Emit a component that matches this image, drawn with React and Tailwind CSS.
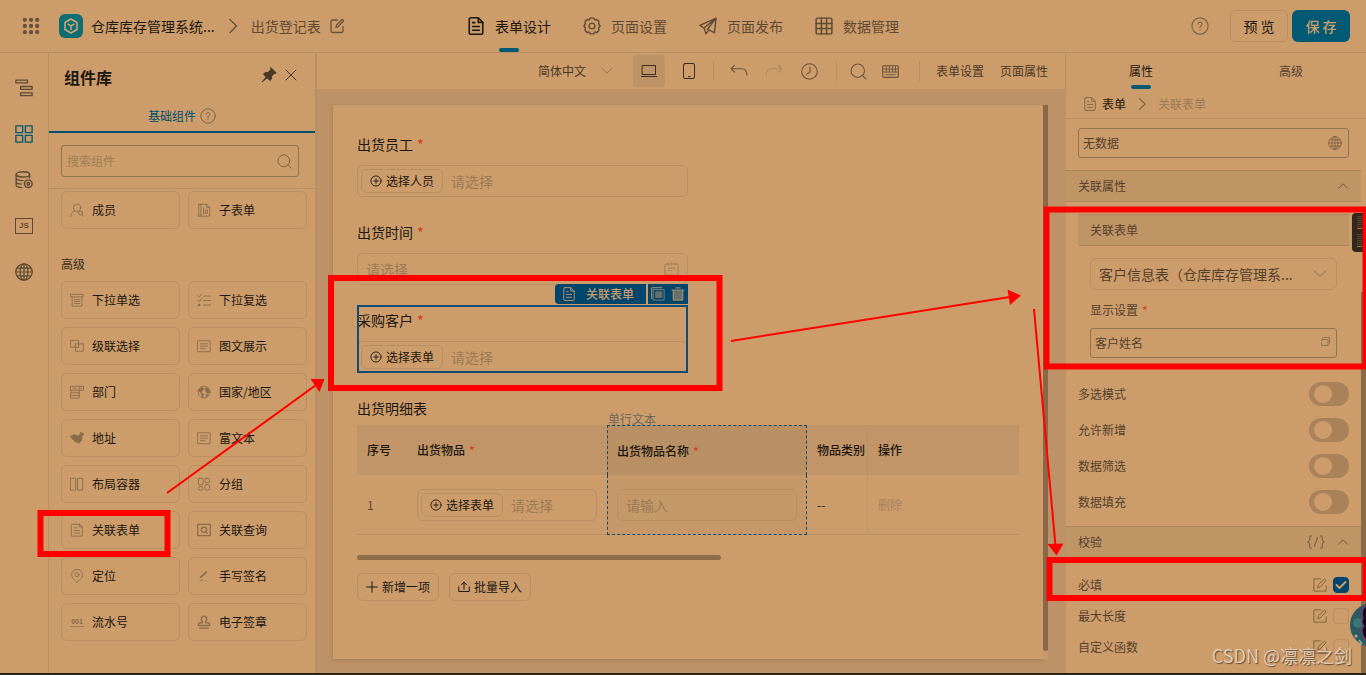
import React from "react";

function Icon({ size = 16, box = 16, sw = 1, className = "", children }) {
  return (
    <svg
      width={size}
      height={size}
      viewBox={`0 0 ${box} ${box}`}
      fill="none"
      stroke="currentColor"
      strokeWidth={sw}
      strokeLinecap="round"
      strokeLinejoin="round"
      className={`shrink-0 ${className}`}
      aria-hidden="true"
    >
      {children}
    </svg>
  );
}

const Doc = (p) => (
  <Icon {...p}>
    <path d="M3.500 .7h6.500l4 4v9.300a1.400 1.400 0 0 1-1.400 1.400h-9.200A1.400 1.400 0 0 1 2 14v-11.900A1.400 1.400 0 0 1 3.500 .7z" />
    <path d="M10 .8v4h4M5 5h2M5 8.500h6M5 11.800h6" />
  </Icon>
);
const Help = (p) => (
  <Icon {...p}>
    <circle cx="8" cy="8" r="7.200" />
    <path d="M6.200 6.300c0-2.400 3.700-2.300 3.700 0 0 1.400-1.900 1.500-1.900 3.100M8 11.300v.3" />
  </Icon>
);
const Search = (p) => (
  <Icon {...p}>
    <circle cx="7.300" cy="7.300" r="6.300" />
    <path d="M12 12l3 3" />
  </Icon>
);
const Globe = (p) => (
  <Icon {...p}>
    <circle cx="8" cy="8" r="7.300" />
    <ellipse cx="8" cy="8" rx="3.500" ry="7.300" />
    <path d="M.7 8h14.600M8 .7v14.600M1.800 4.500h12.400M1.800 11.500h12.400" />
  </Icon>
);
const Chevron = ({ dir, ...p }) => (
  <Icon {...p}>
    <path d={dir === "right" ? "M5 1.500l6.500 6.500-6.500 6.500" : dir === "up" ? "M2 11l6-6 6 6" : "M1.500 4.500L8 11l6.500-6.500"} />
  </Icon>
);
const PlusCircle = (p) => (
  <Icon {...p}>
    <circle cx="8" cy="8" r="6.800" />
    <path d="M8 5v6M5 8h6" />
  </Icon>
);
const EditSquare = (p) => (
  <Icon {...p}>
    <path d="M9 1H1v14h14V9" />
    <path d="M5.500 10.800l.7-3.300L12.700 1.700c1-.8 2.600.8 1.700 1.800L8.500 10z" />
  </Icon>
);

const glyphs = {
  member: (
    <>
      <circle cx="8" cy="5.500" r="4.200" />
      <path d="M1 15.300c0-3 1.500-5.300 4-6M15 15.300l-1.200-2" />
      <circle cx="12" cy="11.500" r="2.200" />
    </>
  ),
  subform: (
    <>
      <path d="M5 1.500h6l3.500 3.500v10H5zM2 1.500v13.500M2 1.500h3M2 15h3M11 1.500V5h3.500" />
      <path d="M7.500 5.500v7M10 8h2v4h-2z" />
    </>
  ),
  select: (
    <>
      <path d="M1 1.500h14v3H1zM2.500 4.500V15h11V4.500" />
      <path d="M5 7.500h6M5 9.700h6M5 12h6" />
    </>
  ),
  multi: (
    <>
      <path d="M.8 3l1.800 1.800L5.300 1.500M.8 8l1.800 1.800L5.300 6.500M7.500 3.500H16M7.500 8.500H16M7.500 13.700H16" />
      <rect x="1.800" y="13" width="1.500" height="1.500" fill="currentColor" />
    </>
  ),
  cascade: <path d="M6 9.500H.8v-8h9v4M6.500 5.500h3.300v4H6.500zM9.800 5.500h5.500v8.500h-9V9.500" />,
  text: (
    <>
      <rect x="1" y="2" width="14" height="12.500" />
      <path d="M4 5.500h8M4 8.200h8M4 11h5" />
    </>
  ),
  dept: (
    <>
      <path d="M1 1.500h14.500v4.500H1zM10.500 1.500V6M1 9h9.500v6H1zM10.500 6v3M1 6v3M1 12h9.500" />
      <path d="M3.500 3.800h4M12.500 3.800h1" />
    </>
  ),
  world: (
    <>
      <circle cx="8" cy="8" r="6.800" />
      <path d="M2 5l3.500-2.500L7.500 4 6 6.500l-1 2L2.500 7zM10 3l3 1.500 1.500 4-2.500 1-2.500-3zM5 9.500l2.500 1-1 3.500zM10.500 11l2 .5-1.500 1.500z" fill="currentColor" />
    </>
  ),
  china: (
    <path
      d="M.8 6l2.700-.8L4.700 3.500l1.800 1.500 3 .7 1.800-1.500.5-2.700 2.200 1.200 1.600-.2-.6 2.300-2 1.500.7 2-.6 2.800-2 1.500-1 1.600-1.600-1.700-2 .4-1.200-1.900L2.500 9z"
      fill="currentColor"
    />
  ),
  columns: <path d="M1 1.500h5.500v13.500H1zM9 1.500h5.500v13.500H9z" />,
  group: (
    <>
      <rect x="1.500" y="1.500" width="5.500" height="7.500" rx="1" />
      <rect x="9" y="1.500" width="5.500" height="5" rx="2" />
      <rect x="1.500" y="11" width="5.500" height="4" rx="2" />
      <rect x="9" y="8.500" width="5.500" height="6.500" rx="2" />
    </>
  ),
  form: (
    <>
      <path d="M2 1.500h9l3 3v10.500H2zM11 1.500v3h3" />
      <path d="M5 5.500h3M5 8.500h6M5 11.500h6" />
    </>
  ),
  query: (
    <>
      <rect x=".8" y="1.500" width="14.400" height="13" strokeWidth="1.400" />
      <circle cx="8" cy="7.600" r="3" strokeWidth="1.400" />
      <path d="M10 10l1.800 1.800" strokeWidth="1.400" />
    </>
  ),
  pin: (
    <>
      <path d="M8 15.500C4 11.700 1.800 9.400 1.800 6.600a6.200 6.200 0 0 1 12.400 0c0 2.800-2.200 5.100-6.200 8.900z" />
      <circle cx="8" cy="6.600" r="2.200" />
    </>
  ),
  sign: (
    <>
      <path d="M4 9.500L10.500 3.500" strokeWidth="1.800" />
      <path d="M3.500 13.500l1.500-1.300 1.500 1.300M10 13.500h.5" />
    </>
  ),
  stamp: (
    <path
      d="M6.300 9c0-2-1.500-2.500-1.500-4.500a3.200 3.200 0 0 1 6.400 0c0 2-1.500 2.500-1.500 4.500h3.500c1 0 1.300.6 1.300 3h-13c0-2.400.3-3 1.300-3zM3 15h10"
      strokeWidth="1.500"
    />
  ),
};

const tools = [
  ["select", "下拉单选"],
  ["multi", "下拉复选"],
  ["cascade", "级联选择"],
  ["text", "图文展示"],
  ["dept", "部门"],
  ["world", "国家/地区"],
  ["china", "地址"],
  ["text", "富文本"],
  ["columns", "布局容器"],
  ["group", "分组"],
  ["form", "关联表单"],
  ["query", "关联查询"],
  ["pin", "定位"],
  ["sign", "手写签名"],
  ["serial", "流水号"],
  ["stamp", "电子签章"],
];

function Tool({ icon, label }) {
  return (
    <button type="button" className="flex h-[38px] items-center gap-2 rounded-md border border-[#ba8f61] px-2 text-xs text-[#1d1711]">
      {icon === "serial" ? (
        <span className="w-3.5 border-b border-[#a07d55] text-center font-['Liberation_Sans',sans-serif] text-[7px] leading-[9px] font-bold text-[#8b6b48]">001</span>
      ) : (
        <Icon size={14} className="text-[#8b6b48]">{glyphs[icon]}</Icon>
      )}
      {label}
    </button>
  );
}

function Header() {
  const nav = [
    ["表单设计", <Doc size={18} sw={1.400} />, true],
    [
      "页面设置",
      <Icon size={18} sw={1.200}>
        <path d="M6.400 1h3.200l.9 1.700 1.900-.5 1.900 2-.5 1.900L15.200 8l-1.400 1.900.5 1.900-1.900 2-1.900-.5L9.600 15H6.400l-.9-1.700-1.900.5-1.900-2 .5-1.900L.8 8l1.400-1.900-.5-1.900 1.900-2 1.900.5z" />
        <circle cx="8" cy="8" r="2.600" />
      </Icon>,
    ],
    [
      "页面发布",
      <Icon size={18} sw={1.200}>
        <path d="M15.200 1L.8 7.500l3.700 2.300L15.200 1l-1.500 13-5-2.500-2.500 3.500-1.700-5.200M15.200 1L7.500 11" />
      </Icon>,
    ],
    [
      "数据管理",
      <Icon size={18} sw={1.300}>
        <rect x="1" y="1" width="14" height="14" rx="1" />
        <path d="M5.700 1v14M10.300 1v14M1 5.700h14M1 10.300h14" />
      </Icon>,
    ],
  ];
  return (
    <header className="grid h-[53px] shrink-0 grid-cols-[1fr_auto_1fr] items-center border-b border-[#ba8f61] px-4">
      <div className="flex items-center">
        <button type="button" aria-label="应用" className="mr-[19px] ml-1.5 text-[#6b5238]">
          <Icon size={18}>
            {[2.500, 8, 13.500].map((x) =>
              [2.500, 8, 13.500].map((y) => <circle key={`${x}-${y}`} cx={x} cy={y} r="1.400" fill="currentColor" />)
            )}
          </Icon>
        </button>
        <span className="flex size-6 items-center justify-center rounded-md bg-[#0f6e74] text-[#cfa678]">
          <Icon size={16} sw={1.500}>
            <path d="M8 1l6 3.500v7L8 15l-6-3.500v-7zM5 6.200L8 8l3-1.800M8 8v3.500" />
          </Icon>
        </span>
        <span className="ml-2 text-sm text-[#1d1711]">仓库库存管理系统...</span>
        <Chevron dir="right" size={16} sw={1.400} className="mx-2.5 text-[#6b5238]" />
        <span className="text-sm text-[#5f4932]">出货登记表</span>
        <button type="button" aria-label="编辑" className="ml-2 text-[#6b5238]">
          <Icon size={16} sw={1.300}>
            <path d="M8.500 2H3.500A1.500 1.500 0 0 0 2 3.500v9.500a1.500 1.500 0 0 0 1.500 1.500h9A1.500 1.500 0 0 0 14 13V8.500M7 9.500l.5-2.200 5.300-5.500c.9-.8 2.200.6 1.500 1.500L9 8.900z" />
          </Icon>
        </button>
      </div>
      <nav className="flex h-full gap-8">
        {nav.map(([label, icon, on]) => (
          <a key={label} href="#" className={`relative flex h-full items-center gap-2.5 text-sm ${on ? "text-[#1d1711]" : "text-[#5f4932]"}`}>
            {icon}
            {label}
            {on && <span className="absolute bottom-0 left-1/2 h-1 w-5 -translate-x-1/2 rounded-full bg-[#005a73]" />}
          </a>
        ))}
      </nav>
      <div className="flex items-center justify-end gap-1">
        <button type="button" aria-label="帮助" className="mr-[17px] text-[#80623f]">
          <Help size={18} />
        </button>
        <button type="button" className="h-8 w-[58px] rounded-md border border-[#ba8f61] text-sm text-[#1d1711]">预 览</button>
        <button type="button" className="h-8 w-[58px] rounded-md bg-[#005a73] text-sm font-medium text-[#cc9d6b]">保 存</button>
      </div>
    </header>
  );
}

function Rail() {
  const items = [
    ["大纲", <path d="M.8 1h10.200v2.500H.800zM5 6.700h10.200v2.500H5zM5 12.300h10.200v2.500H5z" />],
    ["组件", <path d="M.8.800h6v6h-6zM9.200.800h6v6h-6zM.8 9.200h6v6h-6zM9.200 9.200h6v6h-6z" />],
    [
      "数据",
      <>
        <ellipse cx="7" cy="3" rx="6" ry="2.300" />
        <path d="M1 3v9.500c0 1.300 2 2.200 5 2.300M13 3v3M1 6.300c0 1.200 2.500 2.200 6 2.200M1 9.500c0 1.200 2 2 4.500 2.100" />
        <circle cx="11.800" cy="11.300" r="3.400" strokeDasharray="2 .7" strokeWidth="1.300" />
        <circle cx="11.800" cy="11.300" r="1.100" />
      </>,
    ],
    ["脚本", null],
    ["语言", null],
  ];
  return (
    <aside className="flex w-[49px] shrink-0 flex-col items-center gap-7 border-r border-[#ba8f61] pt-[26px] text-[#5f4932]">
      {items.map(([label, art], i) => (
        <button key={label} type="button" aria-label={label} className={`flex size-[18px] items-center justify-center ${i === 1 ? "text-[#005a73]" : ""}`}>
          {label === "脚本" ? (
            <span className="flex h-4 w-[18px] shrink-0 items-center justify-center border border-[#5f4932] font-['Liberation_Sans',sans-serif] text-[8px] leading-none font-bold">JS</span>
          ) : label === "语言" ? (
            <Globe size={18} sw={1.100} />
          ) : (
            <Icon size={18} sw={1.200}>{art}</Icon>
          )}
        </button>
      ))}
    </aside>
  );
}

function Library() {
  return (
    <aside className="flex w-[268px] shrink-0 flex-col border-r-2 border-[#ba8f61]">
      <div className="flex h-11 items-center pr-4 pl-[15px]">
        <h2 className="grow pt-1 text-base font-bold text-[#1d1711]">组件库</h2>
        <button type="button" aria-label="固定" className="mr-1.5 text-[#4a3826]">
          <Icon size={16}>
            <path d="M10 .8l5.200 5.200-2 .5-2.700 2.700-.2 3-1.500 1.300-2.700-2.700L1 15l4.200-5L2.500 7.200 4 5.700l3-.2 2.700-2.700z" fill="currentColor" />
          </Icon>
        </button>
        <button type="button" aria-label="关闭" className="text-[#4a3826]">
          <Icon size={16}><path d="M3 3l10 10M13 3L3 13" /></Icon>
        </button>
      </div>
      <div className="flex h-9 items-center justify-center gap-1 border-b-2 border-[#004f6e] pt-1 text-xs text-[#004f6e]">
        基础组件
        <Help size={16} className="text-[#80623f]" />
      </div>
      <div className="border-b border-[#ba8f61] pt-3 pr-4 pb-[11px] pl-3">
        <label className="flex h-8 items-center rounded-[3px] border border-[#94744d] pr-1.5 pl-[5px]">
          <input placeholder="搜索组件" aria-label="搜索组件" className="min-w-0 grow bg-transparent text-xs outline-none placeholder:text-[#a07d55]" />
          <Search size={15} className="text-[#80623f]" />
        </label>
      </div>
      <div className="grow overflow-hidden pt-0.5 pr-2 pl-3">
        <div className="grid grid-cols-2 gap-2">
          <Tool icon="member" label="成员" />
          <Tool icon="subform" label="子表单" />
        </div>
        <h3 className="mt-[26px] mb-2 text-xs leading-[18px] text-[#3a2c1e]">高级</h3>
        <div className="grid grid-cols-2 gap-2">
          {tools.map(([icon, label]) => (
            <Tool key={label} icon={icon} label={label} />
          ))}
        </div>
      </div>
    </aside>
  );
}

function Toolbar() {
  const divider = <span className="h-5 w-px bg-[#ba8f61]" />;
  return (
    <div className="flex h-9 shrink-0 items-center justify-end border-r border-[#ba8f61] pr-[17px] text-xs text-[#4a3826]">
      <button type="button" className="mr-5 flex items-center gap-[15px]">
        简体中文
        <Chevron size={12} className="text-[#80623f]" />
      </button>
      <button type="button" aria-label="电脑" className="mr-4 flex size-8 items-center justify-center rounded-sm bg-[#be9467] text-[#3a2c1e]">
        <Icon size={16}><path d="M1.500 2.500h13v9h-13zM.5 13.500h15" /></Icon>
      </button>
      <button type="button" aria-label="手机" className="mr-4 text-[#3a2c1e]">
        <Icon size={16}><rect x="2.500" y=".5" width="11" height="15" rx="1.500" /><path d="M7.500 13.500h1.500" /></Icon>
      </button>
      {divider}
      <button type="button" aria-label="撤销" className="mr-[17px] ml-4 text-[#6b5238]">
        <Icon size={18}><path d="M4 3L1 6l3 3M1 6h9.500c3 0 4.500 2.200 4.500 5.500" /></Icon>
      </button>
      <button type="button" aria-label="重做" className="mr-[18px] text-[#b3895c]">
        <Icon size={18}><path d="M12 3l3 3-3 3M15 6H5.500C2.500 6 1 8.200 1 11.500" /></Icon>
      </button>
      <button type="button" aria-label="历史" className="mr-[18px] text-[#6b5238]">
        <Icon size={17}><circle cx="8" cy="8" r="7.300" /><path d="M8.500 4v4.500l-3 2" /></Icon>
      </button>
      {divider}
      <button type="button" aria-label="查找" className="mr-[15px] ml-[13px] text-[#6b5238]">
        <Search size={17} />
      </button>
      <button type="button" aria-label="快捷键" className="mr-5 text-[#6b5238]">
        <Icon size={17}>
          <rect x=".7" y="2.500" width="14.600" height="11" rx=".8" />
          <path d="M1 5.700h14M1 8.500h14M4 3v5.500M7 3v5.500M10 3v5.500M12.700 3v5.500M3.500 11h9" strokeWidth=".8" />
        </Icon>
      </button>
      {divider}
      <button type="button" className="ml-4">表单设置</button>
      <button type="button" className="ml-4">页面属性</button>
    </div>
  );
}

const Star = () => <span className="ml-1 font-medium text-[#d2442a]">*</span>;

function Picker({ id, action }) {
  return (
    <div className="flex h-8 items-center rounded-md border border-[#ba8f61] pl-[3px]">
      <button type="button" className="flex h-6 w-[82px] shrink-0 items-center justify-center gap-1 rounded-md border border-[#ba8f61] text-xs text-[#1d1711]">
        <PlusCircle size={12} sw={1.200} />
        {action}
      </button>
      <input id={id} placeholder="请选择" className="ml-2 min-w-0 grow bg-transparent text-sm outline-none placeholder:text-[#9c7a53]" />
    </div>
  );
}

function FieldLabel({ id, children, star = true }) {
  return (
    <label htmlFor={id} className="block h-8 text-sm leading-[30px] text-[#1d1711]">
      {children}
      {star && <Star />}
    </label>
  );
}

function FormCanvas() {
  return (
    <div className="flex min-h-0 grow bg-[#bd9266] pt-4 pr-[18px] pb-3.5 pl-4">
      <div className="min-w-0 grow bg-[#cc9d6b] p-6 shadow-[0_1px_4px_rgba(90,60,30,0.25)]">
        <div className="mb-5 w-1/2 min-w-[331px]">
          <FieldLabel id="staff">出货员工</FieldLabel>
          <div className="mt-1"><Picker id="staff" action="选择人员" /></div>
        </div>
        <div className="mb-5 w-1/2 min-w-[331px]">
          <FieldLabel id="time">出货时间</FieldLabel>
          <div className="mt-1 flex h-8 items-center rounded-md border border-[#ba8f61] px-2">
            <input id="time" placeholder="请选择" className="min-w-0 grow bg-transparent text-sm outline-none placeholder:text-[#9c7a53]" />
            <Icon size={15} sw={1.200} className="text-[#a98259]">
              <rect x="1" y="2" width="14" height="12" rx="2" />
              <path d="M4 .8v2M8 .8v2M12 .8v2M4.500 6.500h7M4.500 9h4" />
            </Icon>
          </div>
        </div>
        <div className="relative mb-5 w-1/2 min-w-[331px] outline-2 -outline-offset-2 outline-[#124c70]">
          <FieldLabel id="client">采购客户</FieldLabel>
          <div className="mt-1"><Picker id="client" action="选择表单" /></div>
          <div className="absolute right-0 bottom-full mb-px flex gap-0.5 text-[#cc9d6b]">
            <span className="flex h-5 w-[91px] items-center gap-2.5 rounded-l-sm bg-[#00456b] pl-[7px] text-xs font-medium">
              <Doc size={14} />
              关联表单
            </span>
            <span className="flex h-5 w-10 items-center justify-between bg-[#00456b] px-[3px]">
              <button type="button" aria-label="复制">
                <Icon size={14}>
                  <path d="M12.500.8H.8v12.500" />
                  <rect x="3" y="3" width="12" height="12" opacity=".7" />
                  <rect x="5.500" y="5.500" width="7" height="6.500" fill="currentColor" opacity=".5" />
                </Icon>
              </button>
              <button type="button" aria-label="删除字段">
                <Icon size={14}>
                  <path d="M1 3.500h14M5.500 1h5" />
                  <path d="M2.500 4v11h11V4" fill="currentColor" fillOpacity=".5" />
                </Icon>
              </button>
            </span>
          </div>
        </div>
        <FieldLabel star={false}>出货明细表</FieldLabel>
        <table className="w-full table-fixed border-separate border-spacing-0 text-left text-xs text-[#1d1711]">
          <colgroup>
            <col className="w-[50px]" />
            <col className="w-[200px]" />
            <col className="w-[200px]" />
            <col className="w-[60px]" />
            <col />
          </colgroup>
          <thead>
            <tr className="h-[50px] bg-[#c19567] [&>th]:p-0 [&>th]:pl-2.5 [&>th]:font-medium">
              <th>序号</th>
              <th>出货物品<Star /></th>
              <th className="relative border border-b-0 border-dashed border-[#124c70] bg-[#b98f64] !pl-[9px]">
                <span className="absolute bottom-full left-0 text-xs leading-[14px] font-normal text-[#6d685a]">单行文本</span>
                出货物品名称<Star />
              </th>
              <th className="whitespace-nowrap">物品类别</th>
              <th className="border-l border-[#bb9063]">操作</th>
            </tr>
          </thead>
          <tbody>
            <tr className="h-[60px] [&>td]:border-b [&>td]:border-[#ba8f61] [&>td]:p-0 [&>td]:px-2.5">
              <td className="text-[#5f4932]">1</td>
              <td><Picker id="goods" action="选择表单" /></td>
              <td className="border-x border-dashed !border-[#124c70] bg-[#c49869] !px-[9px]">
                <input aria-label="出货物品名称" placeholder="请输入" className="h-8 w-full rounded-md border border-[#ba8f61] bg-transparent px-2 text-sm outline-none placeholder:text-[#9c7a53]" />
              </td>
              <td>--</td>
              <td className="border-l !border-l-[#c39768] text-[#a98259]"><button type="button">删除</button></td>
            </tr>
          </tbody>
        </table>
        <div className="mt-5 h-[5px] w-[55%] rounded-full bg-[#8f6d48]" />
        <div className="mt-[13px] flex gap-2.5 text-xs text-[#1d1711]">
          <button type="button" className="flex h-7 w-[82px] items-center justify-center gap-1 rounded-md border border-[#ba8f61]">
            <Icon size={12} sw={1.300}><path d="M8 1v14M1 8h14" /></Icon>
            新增一项
          </button>
          <button type="button" className="flex h-7 w-[82px] items-center justify-center gap-1 rounded-md border border-[#ba8f61]">
            <Icon size={12} sw={1.300}><path d="M8 11V1.500M4.500 5L8 1.500 11.500 5M1 8v6h14V8" /></Icon>
            批量导入
          </button>
        </div>
      </div>
      <div className="w-[5px] shrink-0 bg-[#c5996b] pb-2">
        <div className="h-full rounded-b-full bg-[#896848]" />
      </div>
    </div>
  );
}

function Section({ title, code }) {
  return (
    <div className="flex h-8 items-center border-y border-[#ae865a] bg-[#c09566] px-3">
      <h3 className="grow">{title}</h3>
      {code && (
        <Icon size={18} className="mr-3 text-[#80623f]">
          <path d="M4 2.500c-2 0-1.500 1-1.500 2.500S2.200 7.500.8 8c1.400.5 1.700 1.500 1.700 3s-.5 2.500 1.500 2.500M12 2.500c2 0 1.500 1 1.500 2.500s.3 2.500 1.700 3c-1.400.5-1.700 1.500-1.700 3s.5 2.500-1.500 2.500M9.500 4l-3 8" />
        </Icon>
      )}
      <button type="button" aria-label={`收起${title}`} className="text-[#6b5238]">
        <Chevron dir="up" size={12} sw={1.200} />
      </button>
    </div>
  );
}

function Properties() {
  return (
    <aside className="flex w-[300px] shrink-0 flex-col text-xs text-[#54402b]">
      <div className="grid h-9 grid-cols-2">
        <button type="button" className="relative text-[#1d1711]">
          属性
          <span className="absolute bottom-0 left-1/2 h-1 w-5 -translate-x-1/2 rounded-full bg-[#005a73]" />
        </button>
        <button type="button">高级</button>
      </div>
      <div className="flex h-[30px] items-center border-b border-[#ba8f61] pl-[17px]">
        <Doc size={14} className="text-[#80623f]" />
        <a href="#" className="ml-[5px] text-[#1d1711]">表单</a>
        <Chevron dir="right" size={14} sw={1.400} className="mx-[9px] text-[#80623f]" />
        <span className="text-[#9c7a53]">关联表单</span>
      </div>
      <div className="flex min-h-0 grow">
        <div className="min-w-0 grow overflow-hidden">
          <div className="px-3 pt-[9px] pb-3">
            <label className="flex h-[30px] items-center rounded-[3px] border border-[#94744d] pr-1.5 pl-1">
              <input defaultValue="无数据" aria-label="数据" className="min-w-0 grow bg-transparent outline-none" />
              <Globe size={14} className="text-[#80623f]" />
            </label>
          </div>
          <Section title="关联属性" />
          <div className="px-3 pt-3 pb-[18px]">
            <h4 className="flex h-8 items-center border-y border-[#ae865a] bg-[#c09566] px-3">关联表单</h4>
            <div className="px-3 pt-3">
              <div className="relative">
                <select aria-label="关联表单" className="h-8 w-full appearance-none rounded-md border border-[#ba8f61] bg-transparent pl-2 text-sm">
                  <option>客户信息表（仓库库存管理系...</option>
                </select>
                <Chevron size={14} sw={1.500} className="pointer-events-none absolute top-[9px] right-2.5 text-[#a98259]" />
              </div>
              <label htmlFor="display" className="block h-[38px] leading-10">显示设置<Star /></label>
              <div className="flex h-[30px] items-center rounded-[3px] border border-[#94744d] pr-1.5 pl-1">
                <input id="display" defaultValue="客户姓名" className="min-w-0 grow bg-transparent outline-none" />
                <Icon size={9} box={9} className="mb-1 text-[#94744d]">
                  <path d="M.5 2.500h6.500v6H.5zM1.500 .5h7v6.500" />
                </Icon>
              </div>
            </div>
          </div>
          <div className="pb-1.5">
            {["多选模式", "允许新增", "数据筛选", "数据填充"].map((t) => (
              <label key={t} className="flex h-9 items-center justify-between px-3">
                {t}
                <input
                  type="checkbox"
                  role="switch"
                  className="h-6 w-10 appearance-none rounded-full bg-[#a98259] p-[3px] before:ml-0.5 before:block before:size-[18px] before:rounded-full before:bg-[#cc9d6b] checked:before:ml-4"
                />
              </label>
            ))}
          </div>
          <Section title="校验" code />
          <div className="pt-[11px]">
            {[["必填", true], ["最大长度", false], ["自定义函数", false]].map(([t, on]) => (
              <div key={t} className="flex h-[31px] items-center px-3">
                <label htmlFor={`rule-${t}`} className="grow">{t}</label>
                <button type="button" aria-label={`编辑${t}`} className="mr-1.5 text-[#80623f]">
                  <EditSquare size={14} sw={1.100} />
                </button>
                <span className="grid size-4">
                  <input
                    id={`rule-${t}`}
                    type="checkbox"
                    defaultChecked={on}
                    className="col-start-1 row-start-1 size-4 appearance-none rounded-sm border border-[#ba8f61] checked:border-[#00456b] checked:bg-[#00456b]"
                  />
                  {on && (
                    <Icon sw={2} className="pointer-events-none col-start-1 row-start-1 text-[#cc9d6b]">
                      <path d="M3.500 8l3 3 6-6" />
                    </Icon>
                  )}
                </span>
              </div>
            ))}
          </div>
        </div>
        <div className="w-[5px] shrink-0 pt-[173px]">
          <div className="h-full bg-[#8b6a47]" />
        </div>
      </div>
    </aside>
  );
}

function Overlays() {
  return (
    <>
      <div className="absolute top-[213px] right-0 h-[39px] w-3.5 rounded-l-sm bg-[#33271d] pt-[3px] pl-[5px]">
        <svg width="5" height="34" aria-hidden="true">
          {[0, 2, 4, 6, 8, 10, 18, 20, 22, 24, 26, 28].map((y) => (
            <rect key={y} x="0" y={y} width="5" height="1" fill="#5a4634" />
          ))}
          <rect x="0" y="12" width="5" height="1" fill="#d4660c" />
          <rect x="0" y="30" width="5" height="1" fill="#6d9912" />
        </svg>
      </div>
      <svg className="absolute top-[603px] right-0" width="16" height="44" aria-hidden="true">
        <circle cx="22" cy="22" r="22" fill="#2b5a64" />
        <circle cx="8" cy="20" r="5" fill="#3b7672" />
        <path d="M17 2c-4 3-6 8-4 13-2 3-1 6 1 8-3 4-2 8 0 11l3 5z" fill="#0d0b16" stroke="#8d2b80" strokeWidth="1.200" />
        <circle cx="6" cy="33" r="1.500" fill="#c9a27a" />
        <path d="M9 37l3 4" stroke="#8fb0a0" strokeWidth="1.500" />
      </svg>
      <p className="absolute right-3.5 bottom-2 text-lg leading-6 text-[#e0cdb8] [text-shadow:1px_1px_1px_rgba(60,40,20,0.7)]">CSDN @凛凛之剑</p>
      <svg className="pointer-events-none absolute top-0 left-0 h-full w-full" fill="none" stroke="#ff0000" aria-hidden="true">
        <g strokeWidth="6">
          <rect x="40.500" y="513" width="127" height="41" />
          <rect x="331" y="278" width="388.500" height="110" />
          <rect x="1046.500" y="209.500" width="319" height="157" />
          <rect x="1049.500" y="560" width="316" height="38" />
        </g>
        <g strokeWidth="2">
          <path d="M167 493L316 385" />
          <path d="M731 341L1010 297" />
          <path d="M1034 309L1055.500 546" />
        </g>
        <g fill="#ff0000" stroke="none">
          <path d="M310.500 379H324.500L319.500 392z" />
          <path d="M1007.500 289.500L1021 295.500L1010 305z" />
          <path d="M1047.500 544L1063.500 543.500L1056.500 555.500z" />
        </g>
      </svg>
    </>
  );
}

export default function App() {
  return (
    <div className="relative flex h-screen flex-col overflow-hidden bg-[#cc9d6b] font-['Noto_Sans_CJK_SC',sans-serif]">
      <Header />
      <main className="flex min-h-0 grow">
        <Rail />
        <Library />
        <div className="flex min-w-0 grow flex-col">
          <Toolbar />
          <FormCanvas />
        </div>
        <Properties />
      </main>
      <div className="h-0.5 shrink-0 bg-[#2a2416]" />
      <Overlays />
    </div>
  );
}
